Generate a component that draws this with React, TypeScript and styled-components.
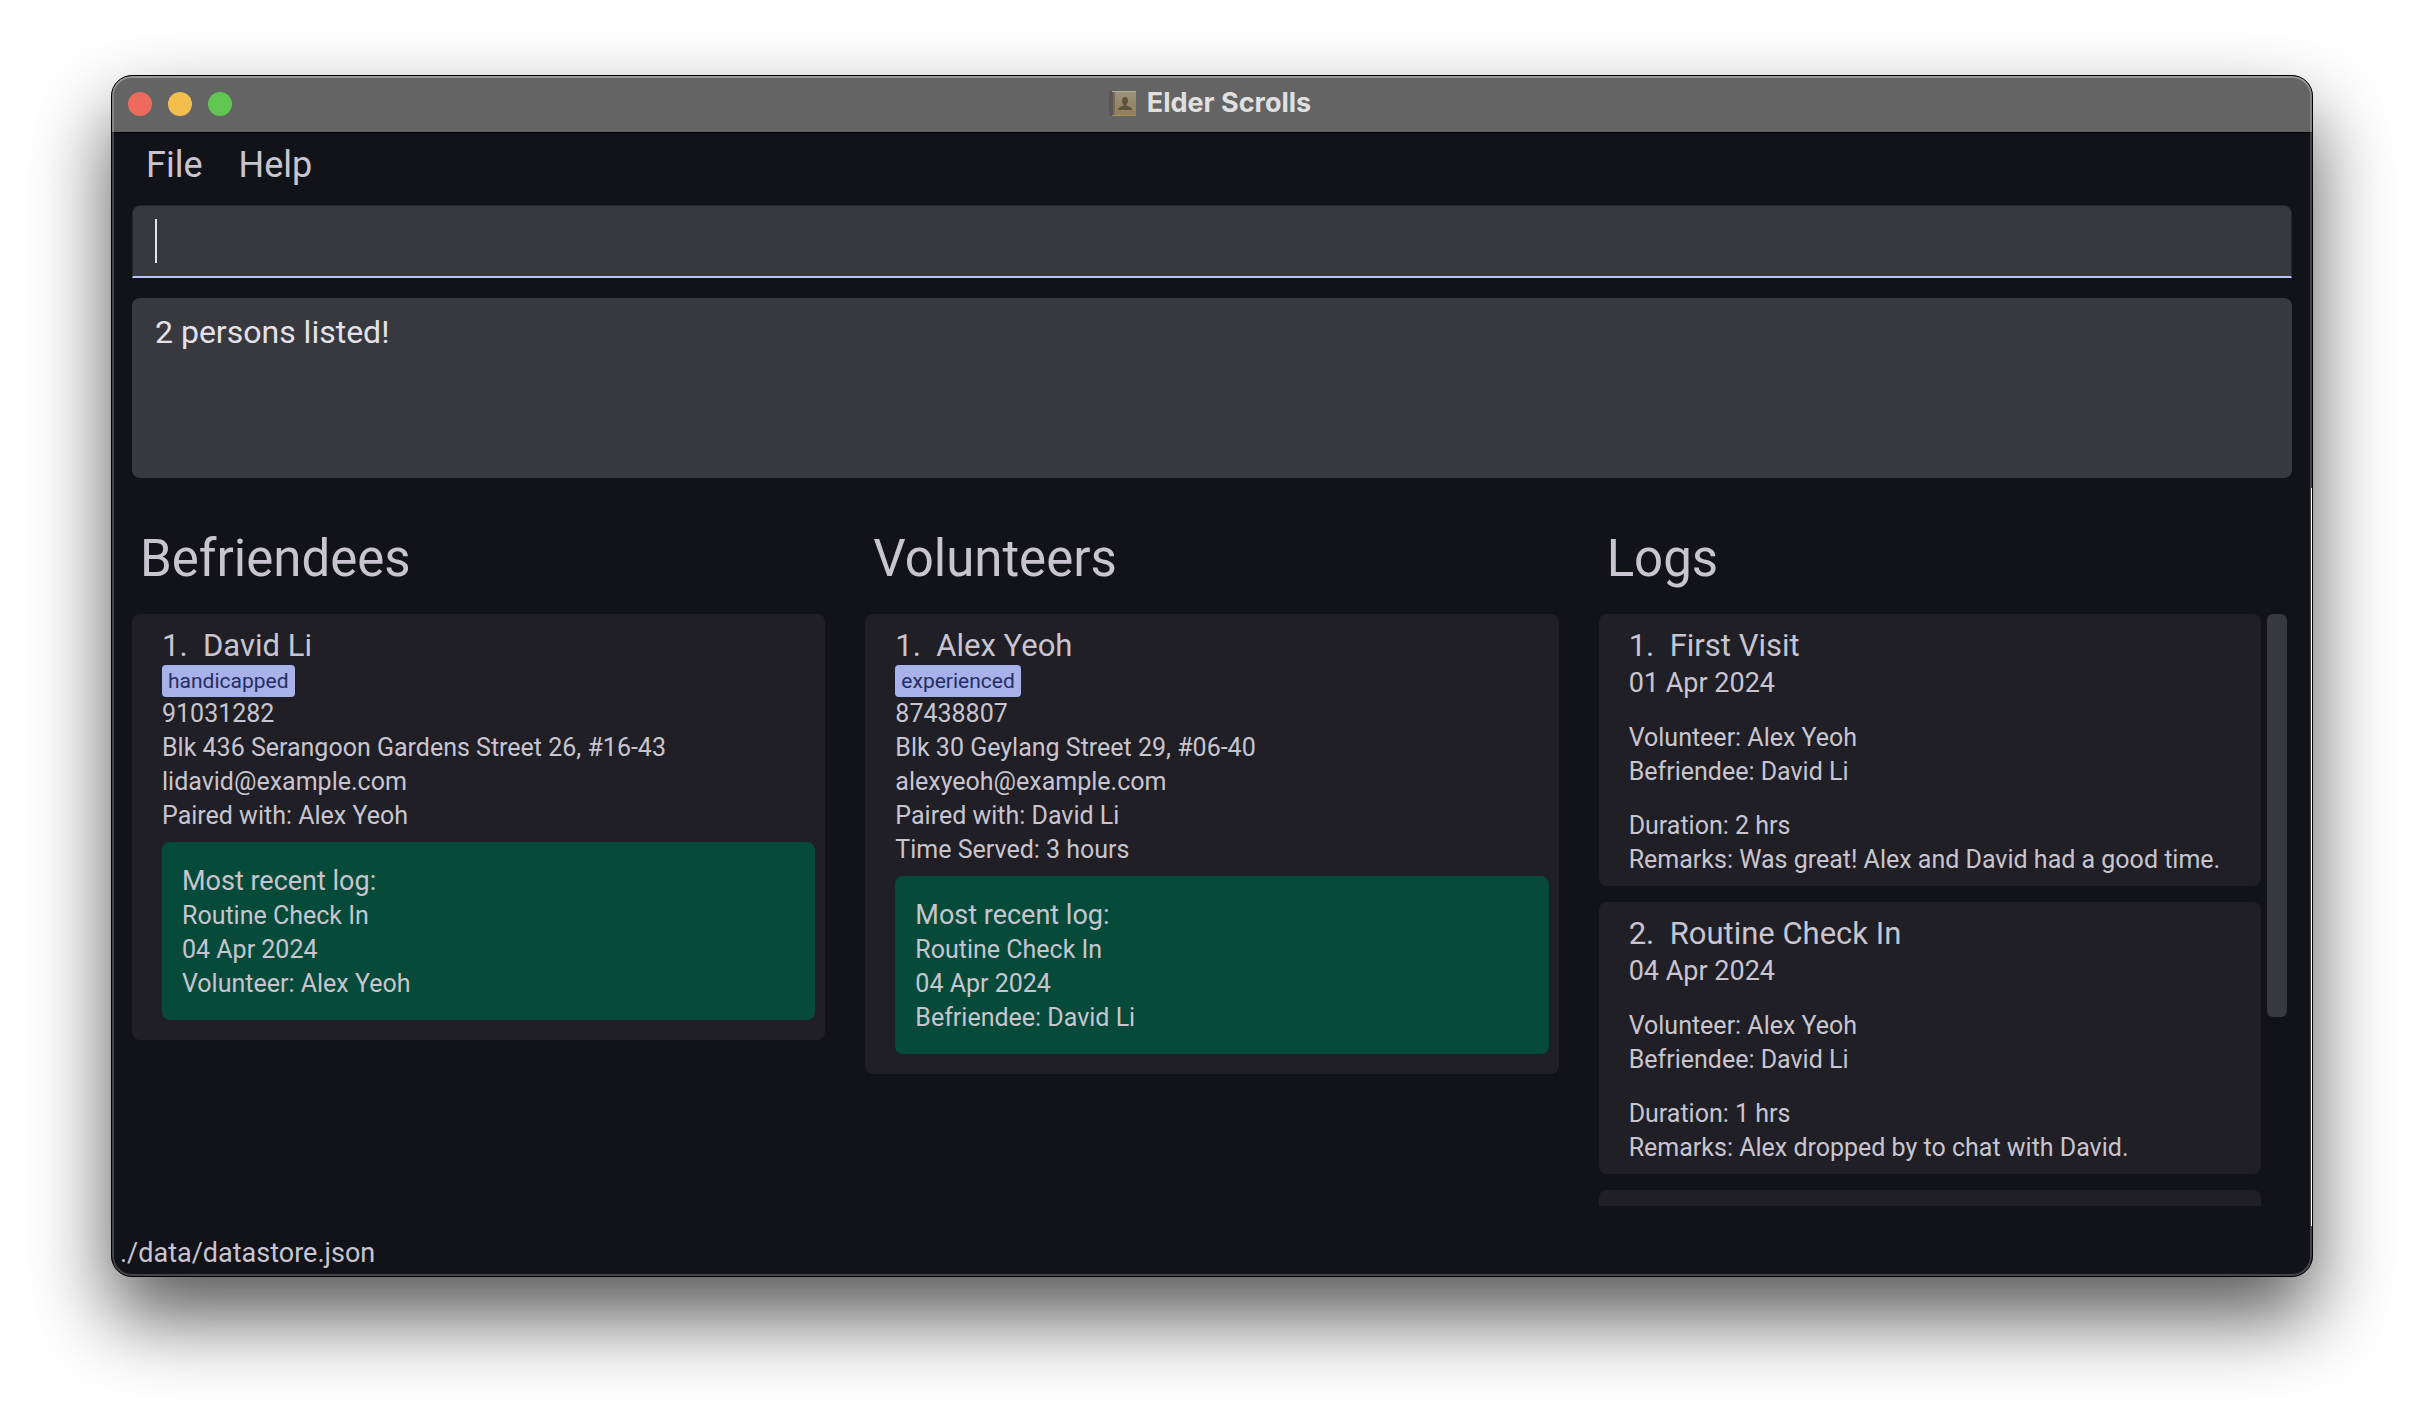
import React from 'react';
import styled, { createGlobalStyle, keyframes } from 'styled-components';

const color = {
  surface: '#121318',
  card: '#201f25',
  field: '#38393e',
  fieldEdge: '#25262b',
  text: '#c8c5d0',
  textStrong: '#e4e1e9',
  primary: '#b9c0fb',
  tag: '#a8b1e9',
  tagText: '#252e61',
  recent: '#064b39',
  titleBar: '#646464',
};

const GlobalStyle = createGlobalStyle`
  *, *::before, *::after { box-sizing: border-box; }
  html, body { margin: 0; background: #fff; }
  body { font-family: Roboto, "Liberation Sans", sans-serif; color: ${color.text}; }
  h1, h2, h3, p, ul, ol { margin: 0; padding: 0; font-weight: 400; list-style: none; }
  button, input { font: inherit; color: inherit; background: none; border: 0; margin: 0; padding: 0; }
`;

const Desktop = styled.div`
  height: 100vh;
  min-height: 1100px;
  padding: 75px 111px 147px;
  display: flex;
`;

const Window = styled.main`
  position: relative;
  flex: 1;
  min-width: 0;
  display: flex;
  flex-direction: column;
  background: ${color.surface};
  border: 1px solid #000;
  border-radius: 21px;
  overflow: hidden;
  box-shadow: 0 40px 80px rgba(0, 0, 0, 0.66);

  &::after {
    content: '';
    position: absolute;
    inset: 0;
    border-radius: 20px;
    box-shadow: inset 0 0 0 2px rgba(255, 255, 255, 0.21),
      inset 0 2px 0 rgba(255, 255, 255, 0.16);
    pointer-events: none;
  }
`;

const EdgeLine = styled.div`
  position: absolute;
  top: 412px;
  right: 0;
  bottom: 50px;
  width: 1px;
  background: #fff;
`;

const TitleBar = styled.header`
  display: grid;
  grid-template-columns: 1fr auto 1fr;
  align-items: center;
  height: 57px;
  padding: 0 16px;
  background: ${color.titleBar};
  border-bottom: 1px solid #000;
`;

const Lights = styled.div`
  display: flex;
  gap: 16px;
`;

const Light = styled.button<{ $tone: string }>`
  width: 24px;
  height: 24px;
  border-radius: 50%;
  background: ${(p) => p.$tone};
`;

const Title = styled.h1`
  display: flex;
  align-items: center;
  gap: 10px;
  margin: 0 4px 2px 0;
  font: 700 27px/32px Inter, "Liberation Sans", sans-serif;
  color: #e0e0e0;
`;

const MenuBar = styled.nav`
  display: flex;
  height: 64px;
  padding: 0 16px;
`;

const MenuButton = styled.button`
  padding: 0 18px;
  font-size: 36px;
  line-height: 64px;
`;

const Body = styled.div`
  flex: 1;
  min-height: 0;
  display: flex;
  flex-direction: column;
  padding: 8px 20px 0;
`;

const blink = keyframes`
  0%, 60% { opacity: 1; }
  61%, 100% { opacity: 0; }
`;

const CommandBox = styled.label`
  display: flex;
  align-items: center;
  height: 73px;
  padding: 0 22px;
  background: ${color.field};
  border: 1px solid ${color.fieldEdge};
  border-bottom: 2px solid ${color.primary};
  border-radius: 8px 8px 0 0;
`;

const Caret = styled.span`
  width: 2px;
  height: 44px;
  background: ${color.textStrong};
  animation: ${blink} 1s 5s infinite;
`;

const CommandInput = styled.input`
  flex: 1;
  height: 44px;
  font-size: 32px;
  outline: none;
  caret-color: transparent;
`;

const Result = styled.output`
  display: block;
  flex: none;
  height: 180px;
  margin-top: 20px;
  padding: 14px 23px;
  border-radius: 8px;
  background: ${color.field};
  color: ${color.textStrong};
  font-size: 32px;
  line-height: 40px;
`;

const Columns = styled.div`
  flex: 1;
  min-height: 0;
  display: grid;
  grid-template-columns: repeat(3, minmax(0, 1fr));
  gap: 40px;
  padding-top: 51px;
`;

const Column = styled.section`
  display: flex;
  flex-direction: column;
  min-height: 0;
`;

const Heading = styled.h2`
  padding: 0 8px;
  margin-bottom: 25px;
  font-size: 51px;
  line-height: 60px;
`;

const ScrollPane = styled.div`
  flex: 1;
  min-height: 0;
  display: flex;
  gap: 6px;
  padding-right: 5px;
`;

const CardList = styled.ul`
  flex: 1;
  min-width: 0;
  min-height: 0;
  display: flex;
  flex-direction: column;
  gap: 16px;
  overflow: hidden;
`;

const ScrollThumb = styled.div`
  width: 20px;
  height: 68%;
  border-radius: 6px;
  background: ${color.field};
`;

const Card = styled.li<{ $bottom: number }>`
  flex: none;
  min-height: 120px;
  padding: 13px 10px ${(p) => p.$bottom}px 30px;
  border-radius: 8px;
  background: ${color.card};
`;

const Name = styled.h3`
  font-size: 31px;
  line-height: 38px;
  white-space: pre;
`;

const Tag = styled.span`
  display: block;
  width: fit-content;
  padding: 0 6px;
  border-radius: 4px;
  background: ${color.tag};
  color: ${color.tagText};
  font-size: 21px;
  line-height: 32px;
`;

const Line = styled.p`
  font-size: 25px;
  line-height: 34px;
`;

const LeadLine = styled.p`
  font-size: 27px;
  line-height: 36px;
`;

const Group = styled.div`
  margin-top: 20px;
`;

const Recent = styled.div`
  margin-top: 9px;
  padding: 21px 20px 19px;
  border-radius: 8px;
  background: ${color.recent};
`;

const StatusBar = styled.footer`
  padding: 30px 8px 6px;
  font-size: 27px;
  line-height: 34px;
`;

const BookIcon = () => (
  <svg width="28" height="27" viewBox="0 0 28 27" aria-hidden="true">
    <defs>
      <linearGradient id="cover" x1="0" y1="0" x2="0" y2="1">
        <stop offset="0" stopColor="#9b917e" />
        <stop offset="1" stopColor="#957f54" />
      </linearGradient>
    </defs>
    <rect x="0" y="1" width="7" height="25" rx="2" fill="#5b5553" />
    <rect x="4" y="1" width="23" height="25" rx="1" fill="url(#cover)" />
    <rect x="4" y="1" width="2" height="25" fill="#756a5c" />
    <rect x="3" y="1" width="24" height="1" fill="#b3aa98" />
    <rect x="3" y="25" width="24" height="1" fill="#a88f5e" />
    <path
      d="M16 7c-2 0-3 1.600-3 3.600 0 1.700.6 3 1.400 3.900v1.300c-2.400.7-5.400 1.600-5.400 4.200h14c0-2.600-3-3.500-5.400-4.200v-1.300c.8-.9 1.400-2.200 1.400-3.900C19 8.600 18 7 16 7z"
      fill="#5d5340"
    />
  </svg>
);

type Person = {
  name: string;
  tag: string;
  details: string[];
  recent: string[];
};

const befriendees: Person[] = [
  {
    name: 'David Li',
    tag: 'handicapped',
    details: [
      '91031282',
      'Blk 436 Serangoon Gardens Street 26, #16-43',
      'lidavid@example.com',
      'Paired with: Alex Yeoh',
    ],
    recent: ['Routine Check In', '04 Apr 2024', 'Volunteer: Alex Yeoh'],
  },
];

const volunteers: Person[] = [
  {
    name: 'Alex Yeoh',
    tag: 'experienced',
    details: [
      '87438807',
      'Blk 30 Geylang Street 29, #06-40',
      'alexyeoh@example.com',
      'Paired with: David Li',
      'Time Served: 3 hours',
    ],
    recent: ['Routine Check In', '04 Apr 2024', 'Befriendee: David Li'],
  },
];

const logs = [
  {
    title: 'First Visit',
    date: '01 Apr 2024',
    volunteer: 'Alex Yeoh',
    befriendee: 'David Li',
    hours: 2,
    remarks: 'Was great! Alex and David had a good time.',
  },
  {
    title: 'Routine Check In',
    date: '04 Apr 2024',
    volunteer: 'Alex Yeoh',
    befriendee: 'David Li',
    hours: 1,
    remarks: 'Alex dropped by to chat with David.',
  },
];

const PersonColumn = ({ title, people }: { title: string; people: Person[] }) => (
  <Column>
    <Heading>{title}</Heading>
    <CardList>
      {people.map((person, i) => (
        <Card key={person.name} $bottom={20}>
          <Name>{`${i + 1}.  ${person.name}`}</Name>
          <Tag>{person.tag}</Tag>
          {person.details.map((d) => (
            <Line key={d}>{d}</Line>
          ))}
          <Recent>
            <LeadLine>Most recent log:</LeadLine>
            {person.recent.map((r) => (
              <Line key={r}>{r}</Line>
            ))}
          </Recent>
        </Card>
      ))}
    </CardList>
  </Column>
);

export default function App() {
  return (
    <>
      <GlobalStyle />
      <Desktop>
        <Window>
          <TitleBar>
            <Lights>
              <Light $tone="#ed6a5e" aria-label="Close" />
              <Light $tone="#f4be4f" aria-label="Minimize" />
              <Light $tone="#62c554" aria-label="Zoom" />
            </Lights>
            <Title>
              <BookIcon />
              Elder Scrolls
            </Title>
          </TitleBar>
          <MenuBar>
            <MenuButton>File</MenuButton>
            <MenuButton>Help</MenuButton>
          </MenuBar>
          <Body>
            <CommandBox>
              <Caret />
              <CommandInput type="text" aria-label="Command" />
            </CommandBox>
            <Result>2 persons listed!</Result>
            <Columns>
              <PersonColumn title="Befriendees" people={befriendees} />
              <PersonColumn title="Volunteers" people={volunteers} />
              <Column>
                <Heading>Logs</Heading>
                <ScrollPane>
                  <CardList>
                    {logs.map((log, i) => (
                      <Card key={log.title} $bottom={9}>
                        <Name>{`${i + 1}.  ${log.title}`}</Name>
                        <LeadLine>{log.date}</LeadLine>
                        <Group>
                          <Line>Volunteer: {log.volunteer}</Line>
                          <Line>Befriendee: {log.befriendee}</Line>
                        </Group>
                        <Group>
                          <Line>Duration: {log.hours} hrs</Line>
                          <Line>Remarks: {log.remarks}</Line>
                        </Group>
                      </Card>
                    ))}
                    <Card $bottom={9} aria-hidden="true" />
                  </CardList>
                  <ScrollThumb />
                </ScrollPane>
              </Column>
            </Columns>
          </Body>
          <StatusBar>./data/datastore.json</StatusBar>
          <EdgeLine />
        </Window>
      </Desktop>
    </>
  );
}
